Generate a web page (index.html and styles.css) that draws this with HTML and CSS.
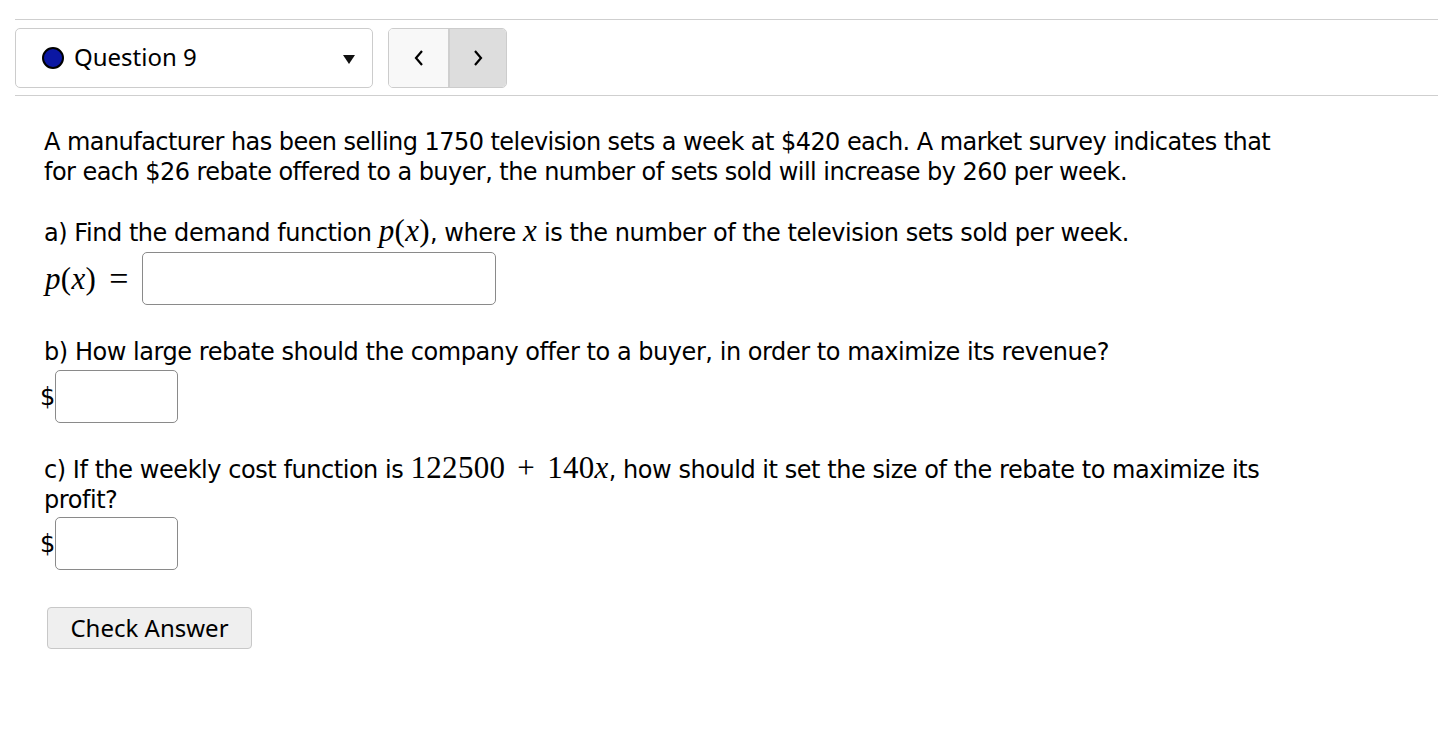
FILE: index.html
```html
<!DOCTYPE html>
<html lang="en">
<head>
<meta charset="utf-8">
<title>Question 9</title>
<link rel="stylesheet" href="styles.css">
</head>
<body>
<div class="topbar">
  <div class="qselect">
    <span class="dot"></span>
    <span class="qlabel">Question 9</span>
    <span class="caret"></span>
  </div>
  <div class="navbtns">
    <button class="nb" aria-label="Previous">
      <svg width="12" height="18" viewBox="0 0 12 18"><polyline points="9,2 3,9 9,16" fill="none" stroke="#000" stroke-width="2.2"/></svg>
    </button>
    <button class="nb nb-active" aria-label="Next">
      <svg width="12" height="18" viewBox="0 0 12 18"><polyline points="3,2 9,9 3,16" fill="none" stroke="#000" stroke-width="2.2"/></svg>
    </button>
  </div>
</div>

<div class="question">
  <p class="intro">A manufacturer has been selling 1750 television sets a week at $420 each. A market survey indicates that for each $26 rebate offered to a buyer, the number of sets sold will increase by 260 per week.</p>

  <p class="part part-a">a) Find the demand function <span class="m"><i>p</i>(<i>x</i>)</span>, where <span class="m"><i>x</i></span> is the number of the television sets sold per week.</p>
  <div class="ans ans-a"><span class="m mlabel"><i>p</i>(<i>x</i>)<span class="eq">=</span></span><input class="box box-wide" type="text"></div>

  <p class="part part-b">b) How large rebate should the company offer to a buyer, in order to maximize its revenue?</p>
  <div class="ans ans-b"><span class="cur">$</span><input class="box box-small" type="text"></div>

  <p class="part part-c">c) If the weekly cost function is <span class="m">122500 + 140<i>x</i></span>, how should it set the size of the rebate to maximize its profit?</p>
  <div class="ans ans-c"><span class="cur">$</span><input class="box box-small" type="text"></div>

  <button class="check">Check Answer</button>
</div>
</body>
</html>
```
FILE: styles.css
```css
html, body {
  margin: 0;
  padding: 0;
  background: #fff;
  color: #000;
}

body {
  font-family: "DejaVu Sans", sans-serif;
  font-size: 24px;
}

.topbar {
  margin: 19px 0 0 15px;
  border-top: 1px solid #cfcfcf;
  border-bottom: 1px solid #cfcfcf;
  padding: 8px 0 7px 0;
  display: flex;
  align-items: center;
  gap: 15px;
  font-family: "Noto Sans", "Open Sans", sans-serif;
}

.qselect {
  box-sizing: border-box;
  width: 358px;
  height: 60px;
  border: 1px solid #cccccc;
  border-radius: 5px;
  display: flex;
  align-items: center;
  padding: 0 17px 0 26px;
}

.dot {
  box-sizing: border-box;
  width: 22px;
  height: 22px;
  border-radius: 50%;
  background: #0b17a3;
  border: 2px solid #000;
  flex: none;
}

.qlabel {
  font-size: 24px;
  margin-left: 10px;
  flex: 1;
  line-height: 1;
  position: relative;
  top: -1px;
}

.caret {
  width: 0;
  height: 0;
  border-left: 6px solid transparent;
  border-right: 6px solid transparent;
  border-top: 9px solid #111;
  margin-top: 3px;
}

.navbtns {
  display: flex;
  height: 60px;
  box-sizing: border-box;
  border: 1px solid #cccccc;
  border-radius: 5px;
  overflow: hidden;
}

.nb {
  width: 59px;
  height: 58px;
  border: 0;
  margin: 0;
  padding: 0;
  background: #f8f8f8;
  display: flex;
  align-items: center;
  justify-content: center;
}

.nb + .nb {
  border-left: 2px solid #cfcfcf;
  width: 58px;
}

.nb-active {
  background: #dddddd;
}

.question {
  padding: 0 0 0 44px;
  margin-top: 31px;
}

.question p {
  margin: 0;
  line-height: 30px;
  max-width: 1250px;
  letter-spacing: -0.45px;
}

.intro {
  letter-spacing: -0.55px !important;
}

.m {
  font-family: "Liberation Serif", "DejaVu Serif", serif;
  font-size: 31px;
  letter-spacing: 0.3px;
  line-height: 24px;
  word-spacing: 4px;
}

.m i {
  font-style: italic;
}

.part-a {
  margin-top: 31px !important;
}

.ans {
  display: flex;
  align-items: center;
}

.ans-a {
  margin-top: 4px;
}

.mlabel {
  display: inline-flex;
  align-items: center;
  line-height: 1;
  margin-left: 1px;
}

.eq {
  margin: 0 13px 0 13px;
  font-size: 34px;
}

.box {
  box-sizing: border-box;
  height: 53px;
  border: 1px solid #8a8a8a;
  border-radius: 5px;
  background: #fff;
  padding: 0 8px;
  font-size: 22px;
  margin: 0;
}

.box-wide {
  width: 354px;
}

.box-small {
  width: 123px;
}

.cur {
  margin-right: 0;
  margin-left: -4px;
  letter-spacing: -0.45px;
}

.part-b {
  margin-top: 32px !important;
}

.ans-b {
  margin-top: 3px;
  margin-left: 0;
}

.part-c {
  margin-top: 32px !important;
}

.ans-c {
  margin-top: 2px;
  margin-left: 0;
}

.check {
  margin: 37px 0 0 3px;
  box-sizing: border-box;
  width: 205px;
  height: 42px;
  border: 1px solid #c8c8c8;
  border-radius: 4px;
  background: #efefef;
  font-family: "Noto Sans", "Open Sans", sans-serif;
  font-size: 24px;
  color: #000;
  padding: 0;
  line-height: 1;
}
```
